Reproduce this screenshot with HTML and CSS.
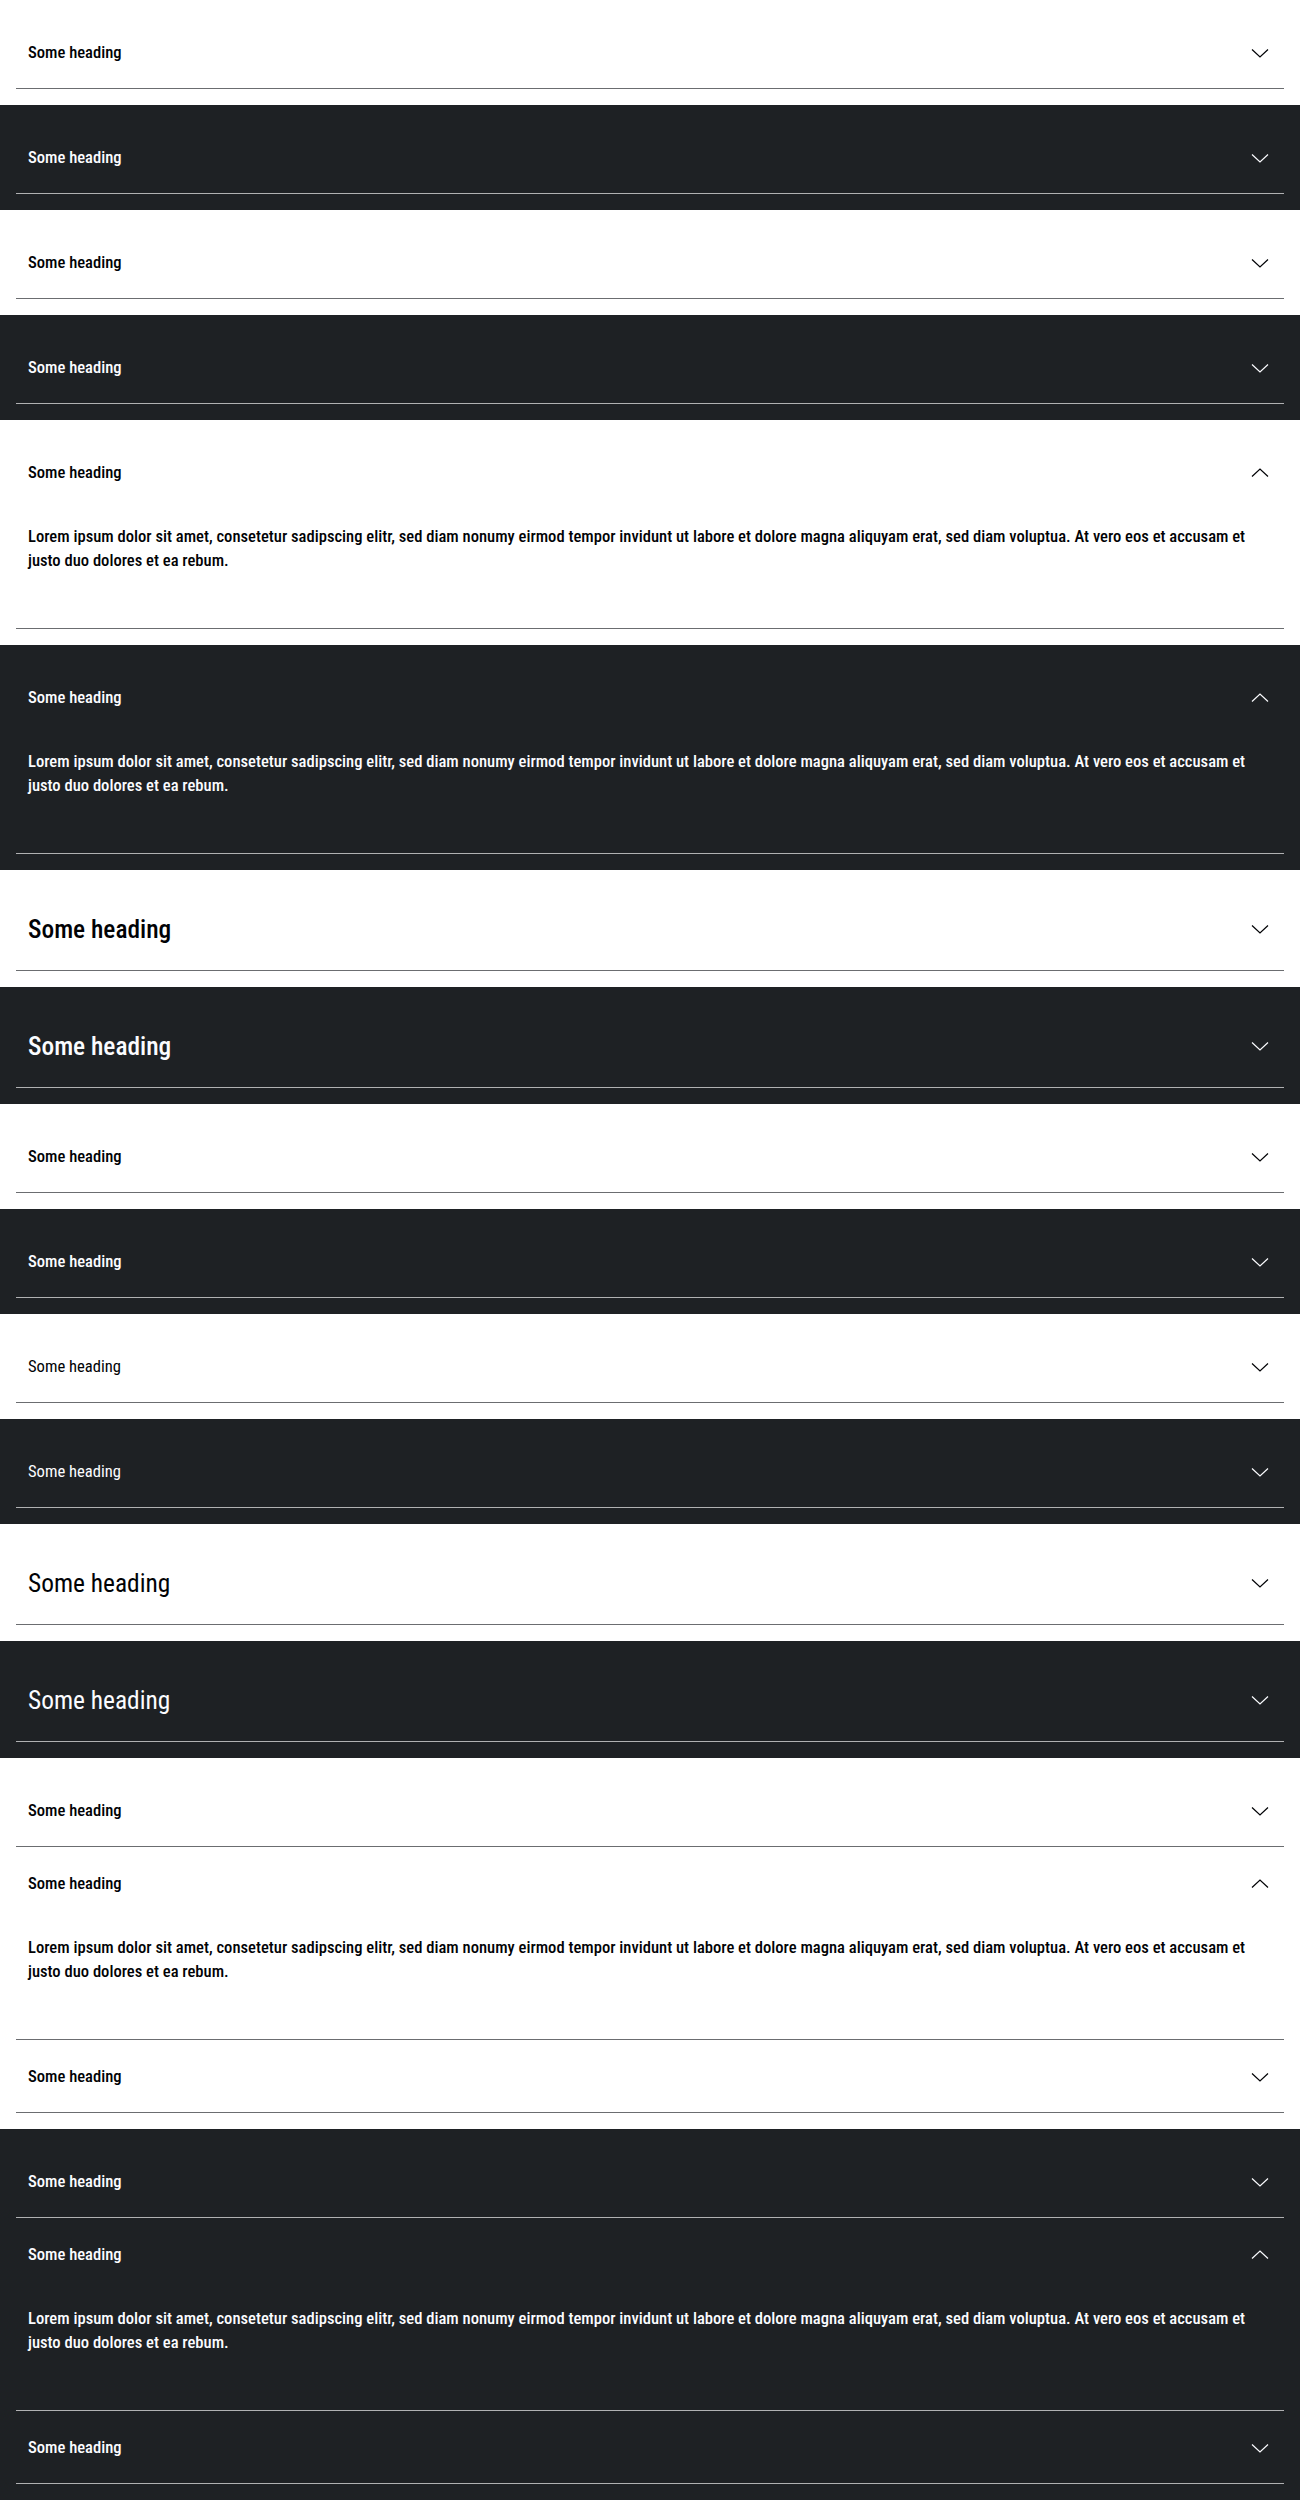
FILE: index.html
```html
<!DOCTYPE html>
<html lang="en">
<head>
<meta charset="utf-8">
<title>Accordion</title>
<link rel="stylesheet" href="styles.css">
</head>
<body>

<section class="acc light">
  <div class="item"><div class="head"><span class="title semi">Some heading</span><svg class="chev" viewBox="0 0 24 24"><path d="M4 8.5 L12 16 L20 8.5"/></svg></div></div>
</section>
<section class="acc dark">
  <div class="item"><div class="head"><span class="title semi">Some heading</span><svg class="chev" viewBox="0 0 24 24"><path d="M4 8.5 L12 16 L20 8.5"/></svg></div></div>
</section>
<section class="acc light">
  <div class="item"><div class="head"><span class="title semi">Some heading</span><svg class="chev" viewBox="0 0 24 24"><path d="M4 8.5 L12 16 L20 8.5"/></svg></div></div>
</section>
<section class="acc dark">
  <div class="item"><div class="head"><span class="title semi">Some heading</span><svg class="chev" viewBox="0 0 24 24"><path d="M4 8.5 L12 16 L20 8.5"/></svg></div></div>
</section>

<section class="acc light">
  <div class="item"><div class="head"><span class="title semi">Some heading</span><svg class="chev" viewBox="0 0 24 24"><path d="M4 15.5 L12 8 L20 15.5"/></svg></div>
    <div class="content">Lorem ipsum dolor sit amet, consetetur sadipscing elitr, sed diam nonumy eirmod tempor invidunt ut labore et dolore magna aliquyam erat, sed diam voluptua. At vero eos et accusam et justo duo dolores et ea rebum.</div></div>
</section>
<section class="acc dark">
  <div class="item"><div class="head"><span class="title semi">Some heading</span><svg class="chev" viewBox="0 0 24 24"><path d="M4 15.5 L12 8 L20 15.5"/></svg></div>
    <div class="content">Lorem ipsum dolor sit amet, consetetur sadipscing elitr, sed diam nonumy eirmod tempor invidunt ut labore et dolore magna aliquyam erat, sed diam voluptua. At vero eos et accusam et justo duo dolores et ea rebum.</div></div>
</section>

<section class="acc light medium">
  <div class="item"><div class="head"><span class="title semi">Some heading</span><svg class="chev" viewBox="0 0 24 24"><path d="M4 8.5 L12 16 L20 8.5"/></svg></div></div>
</section>
<section class="acc dark medium">
  <div class="item"><div class="head"><span class="title semi">Some heading</span><svg class="chev" viewBox="0 0 24 24"><path d="M4 8.5 L12 16 L20 8.5"/></svg></div></div>
</section>

<section class="acc light">
  <div class="item"><div class="head"><span class="title semi">Some heading</span><svg class="chev" viewBox="0 0 24 24"><path d="M4 8.5 L12 16 L20 8.5"/></svg></div></div>
</section>
<section class="acc dark">
  <div class="item"><div class="head"><span class="title semi">Some heading</span><svg class="chev" viewBox="0 0 24 24"><path d="M4 8.5 L12 16 L20 8.5"/></svg></div></div>
</section>

<section class="acc light">
  <div class="item"><div class="head"><span class="title reg">Some heading</span><svg class="chev" viewBox="0 0 24 24"><path d="M4 8.5 L12 16 L20 8.5"/></svg></div></div>
</section>
<section class="acc dark">
  <div class="item"><div class="head"><span class="title reg">Some heading</span><svg class="chev" viewBox="0 0 24 24"><path d="M4 8.5 L12 16 L20 8.5"/></svg></div></div>
</section>

<section class="acc light medium">
  <div class="item"><div class="head"><span class="title reg">Some heading</span><svg class="chev" viewBox="0 0 24 24"><path d="M4 8.5 L12 16 L20 8.5"/></svg></div></div>
</section>
<section class="acc dark medium">
  <div class="item"><div class="head"><span class="title reg">Some heading</span><svg class="chev" viewBox="0 0 24 24"><path d="M4 8.5 L12 16 L20 8.5"/></svg></div></div>
</section>

<section class="acc light">
  <div class="item"><div class="head"><span class="title semi">Some heading</span><svg class="chev" viewBox="0 0 24 24"><path d="M4 8.5 L12 16 L20 8.5"/></svg></div></div>
  <div class="item"><div class="head"><span class="title semi">Some heading</span><svg class="chev" viewBox="0 0 24 24"><path d="M4 15.5 L12 8 L20 15.5"/></svg></div>
    <div class="content">Lorem ipsum dolor sit amet, consetetur sadipscing elitr, sed diam nonumy eirmod tempor invidunt ut labore et dolore magna aliquyam erat, sed diam voluptua. At vero eos et accusam et justo duo dolores et ea rebum.</div></div>
  <div class="item"><div class="head"><span class="title semi">Some heading</span><svg class="chev" viewBox="0 0 24 24"><path d="M4 8.5 L12 16 L20 8.5"/></svg></div></div>
</section>

<section class="acc dark">
  <div class="item"><div class="head"><span class="title semi">Some heading</span><svg class="chev" viewBox="0 0 24 24"><path d="M4 8.5 L12 16 L20 8.5"/></svg></div></div>
  <div class="item"><div class="head"><span class="title semi">Some heading</span><svg class="chev" viewBox="0 0 24 24"><path d="M4 15.5 L12 8 L20 15.5"/></svg></div>
    <div class="content">Lorem ipsum dolor sit amet, consetetur sadipscing elitr, sed diam nonumy eirmod tempor invidunt ut labore et dolore magna aliquyam erat, sed diam voluptua. At vero eos et accusam et justo duo dolores et ea rebum.</div></div>
  <div class="item"><div class="head"><span class="title semi">Some heading</span><svg class="chev" viewBox="0 0 24 24"><path d="M4 8.5 L12 16 L20 8.5"/></svg></div></div>
</section>

</body>
</html>
```

FILE: styles.css
```css
html, body {
  margin: 0;
  padding: 0;
}
body {
  font-family: "Roboto Condensed", "Liberation Sans Narrow", "Arial Narrow", "Liberation Sans", Arial, sans-serif;
  background: #ffffff;
}
.acc {
  padding: 16px;
}
.acc.light {
  background: #ffffff;
  color: #010205;
}
.acc.dark {
  background: #1e2124;
  color: #fbfcff;
}
.item {
  border-bottom: 1px solid #6b6d70;
}
.dark .item {
  border-bottom-color: #b0b1b2;
}
.head {
  display: flex;
  align-items: center;
  justify-content: space-between;
  height: 72px;
  padding: 1px 12px 0;
  box-sizing: border-box;
}
.medium .head {
  height: 84px;
}
.title {
  font-size: 16.6px;
  line-height: 24px;
}
.medium .title {
  font-size: 25.4px;
  line-height: 32px;
}
.semi {
  font-weight: 500;
}
.reg {
  font-weight: 400;
}
.chev {
  width: 24px;
  height: 24px;
  flex: none;
}
.chev path {
  fill: none;
  stroke: currentColor;
  stroke-width: 1.2;
}
.content {
  padding: 17px 12px 55px;
  font-size: 16.6px;
  line-height: 24px;
  font-weight: 500;
}
```
